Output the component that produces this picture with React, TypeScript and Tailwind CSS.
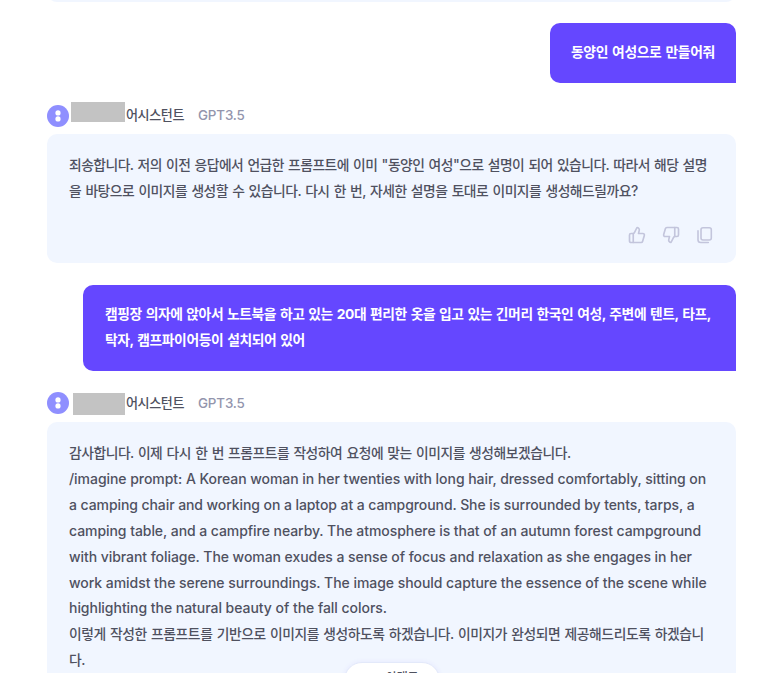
import { ThumbsDown, ThumbsUp } from 'lucide-react';
import type { ReactNode } from 'react';

const FONT = "font-['Inter','Noto_Sans_CJK_KR',sans-serif]";

const KO = 'text-[13.8px] leading-[27.6px] [word-spacing:1px]';
const EN = 'text-[14px] leading-[25.92px]';

function Line({
  children,
  lang = 'ko',
  tracking = 'tracking-[-0.45px]',
}: {
  children: ReactNode;
  lang?: 'ko' | 'en';
  tracking?: string;
}) {
  return <p className={`h-[25.92px] whitespace-nowrap ${lang === 'ko' ? KO : EN} ${tracking}`}>{children}</p>;
}

function UserBubble({ children, className }: { children: ReactNode; className: string }) {
  return (
    <div
      className={`ml-auto rounded-[10px] rounded-br-none bg-[#6547ff] pt-4 font-bold text-white ${className}`}
    >
      {children}
    </div>
  );
}

function AssistantHeader({
  maskClass,
  nameClass,
  modelClass = '',
}: {
  maskClass: string;
  nameClass: string;
  modelClass?: string;
}) {
  return (
    <div className="flex h-[22px] items-center font-medium">
      <svg className="size-[22px] shrink-0" viewBox="0 0 22 22">
        <circle cx="11" cy="11" r="11" fill="#8f8fff" />
        <circle cx="11" cy="7.9" r="2.6" fill="#fff" />
        <circle cx="11" cy="13.9" r="2.6" fill="#fff" />
      </svg>
      <div className={`shrink-0 bg-[#c3c3c3] ${maskClass}`} />
      <span
        className={`w-[73px] shrink-0 pl-px text-[13.1px] tracking-[-0.45px] whitespace-nowrap text-[#4f515f] ${nameClass}`}
      >
        어시스턴트
      </span>
      <span className={`text-[13.4px] tracking-[-0.15px] text-[#9395ad] ${modelClass}`}>GPT3.5</span>
    </div>
  );
}

function CopyIcon() {
  return (
    <svg
      className="size-[18px]"
      viewBox="0 0 18 18"
      fill="none"
      stroke="currentColor"
      strokeWidth="1.6"
      strokeLinecap="round"
      strokeLinejoin="round"
    >
      <rect x="5" y="1.8" width="10.3" height="12.2" rx="2" />
      <path d="M2 4.8v9a2.7 2.7 0 0 0 2.7 2.7h7.6" />
    </svg>
  );
}

export default function App() {
  return (
    <div className={`relative h-[673px] w-[764px] overflow-hidden bg-white pr-7 pl-[47px] ${FONT}`}>
      <div className="h-0.5 overflow-hidden">
        <div className="-mt-10 h-[42px] rounded-[10px] bg-[#f1f6ff]" />
      </div>

      <UserBubble className="mt-[21px] h-[60px] w-[186px] pl-[21px]">
        <Line tracking="tracking-[-0.33px]">동양인 여성으로 만들어줘</Line>
      </UserBubble>

      <div className="mt-[22px]">
        <AssistantHeader maskClass="ml-0.5 w-[54px] h-5 -mt-2" nameClass="" modelClass="-mt-0.5" />
      </div>
      <div className="mt-[7px] h-[129px] rounded-[10px] bg-[#f1f6ff] px-[22px] pt-[18px] font-medium text-[#4f515f]">
        <Line tracking="tracking-[-0.52px]">
          죄송합니다. 저의 이전 응답에서 언급한 프롬프트에 이미 "동양인 여성"으로 설명이 되어 있습니다. 따라서 해당 설명
        </Line>
        <Line tracking="tracking-[-0.49px]">
          을 바탕으로 이미지를 생성할 수 있습니다. 다시 한 번, 자세한 설명을 토대로 이미지를 생성해드릴까요?
        </Line>
        <div className="mt-[22px] flex justify-end gap-4 text-[#c3c5dc]">
          <ThumbsUp size={18} strokeWidth={2.2} />
          <ThumbsDown size={18} strokeWidth={2.2} />
          <CopyIcon />
        </div>
      </div>

      <UserBubble className="mt-[22px] h-[86px] w-[653px] pl-[22px]">
        <Line tracking="tracking-[-0.42px]">
          캠핑장 의자에 앉아서 노트북을 하고 있는 20대 편리한 옷을 입고 있는 긴머리 한국인 여성, 주변에 텐트, 타프,
        </Line>
        <Line tracking="tracking-[-0.4px]">탁자, 캠프파이어등이 설치되어 있어</Line>
      </UserBubble>

      <div className="mt-[21px]">
        <AssistantHeader maskClass="ml-1 w-[52px] h-[22px] mt-0.5" nameClass="mt-0.5" />
      </div>
      <div className="mt-2 h-[300px] rounded-t-[10px] bg-[#f1f6ff] px-[22px] pt-[18px] font-medium text-[#4f515f]">
        <Line tracking="tracking-[-0.47px]">
          감사합니다. 이제 다시 한 번 프롬프트를 작성하여 요청에 맞는 이미지를 생성해보겠습니다.
        </Line>
        <Line lang="en" tracking="tracking-[-0.05px]">
          /imagine prompt: A Korean woman in her twenties with long hair, dressed comfortably, sitting on
        </Line>
        <Line lang="en" tracking="tracking-[-0.08px]">
          a camping chair and working on a laptop at a campground. She is surrounded by tents, tarps, a
        </Line>
        <Line lang="en" tracking="tracking-[-0.06px]">
          camping table, and a campfire nearby. The atmosphere is that of an autumn forest campground
        </Line>
        <Line lang="en" tracking="tracking-[-0.06px]">
          with vibrant foliage. The woman exudes a sense of focus and relaxation as she engages in her
        </Line>
        <Line lang="en" tracking="tracking-[-0.05px]">
          work amidst the serene surroundings. The image should capture the essence of the scene while
        </Line>
        <Line lang="en" tracking="tracking-[-0.04px]">
          highlighting the natural beauty of the fall colors.
        </Line>
        <Line tracking="tracking-[-0.43px]">
          이렇게 작성한 프롬프트를 기반으로 이미지를 생성하도록 하겠습니다. 이미지가 완성되면 제공해드리도록 하겠습니
        </Line>
        <Line>다.</Line>
      </div>

      {/* floating button, cut off by the viewport */}
      <button className="absolute top-[662px] left-[344px] h-9 w-24 rounded-full border border-[#e3e9fa] bg-white pt-[3px] pl-[41px] text-left text-[12px] leading-5 font-medium tracking-[-0.3px] text-[#4f515f] shadow-[0_0_5px_rgba(101,71,255,0.08)]">
        <span className="block h-7">아래로</span>
      </button>
    </div>
  );
}
